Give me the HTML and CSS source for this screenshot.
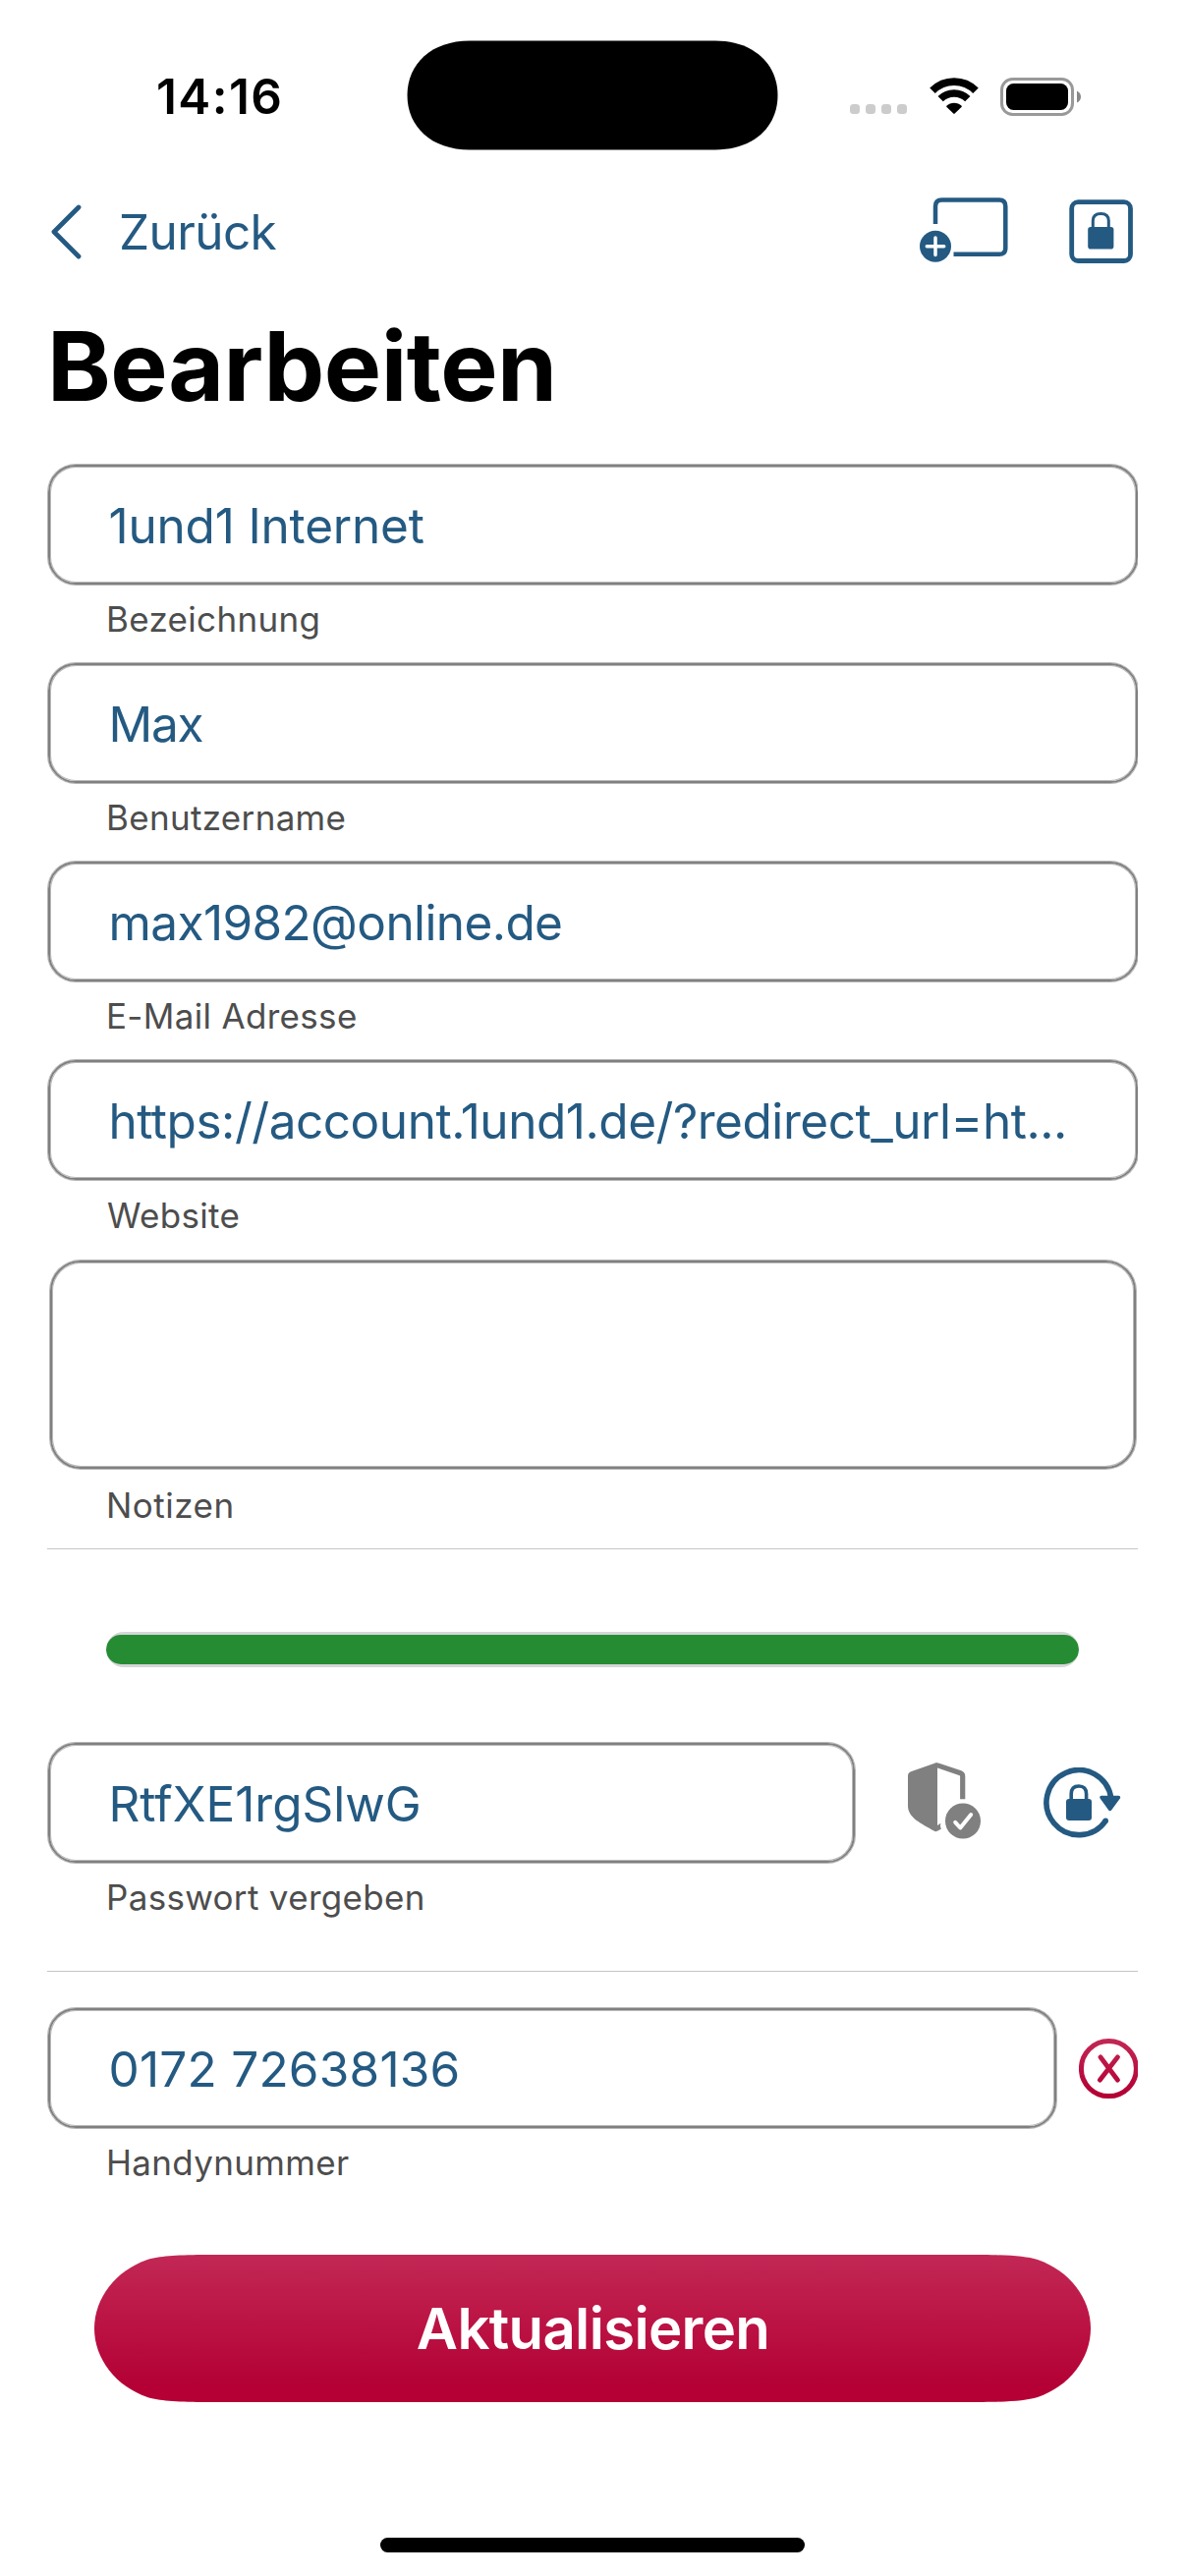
FILE: index.html
```html
<!DOCTYPE html>
<html lang="de">
<head>
<meta charset="utf-8">
<title>Bearbeiten</title>
<link rel="stylesheet" href="styles.css">
</head>
<body>
<header class="status-bar">
  <div class="status-time">14:16</div>
  <svg class="island" width="378" height="112" viewBox="0 0 378 112"><path d="M64 .5H314C353 .5 377.500 24 377.500 56S353 111.500 314 111.500H64C25 111.500 .5 88 .5 56S25 .5 64 .5Z"/></svg>
  <div class="status-icons">
    <svg class="signal" width="58" height="40" viewBox="0 0 58 40"><g fill="#ccc"><rect y="27" width="10" height="10" rx="3.500"/><rect x="16" y="27" width="10" height="10" rx="3.500"/><rect x="32" y="27" width="10" height="10" rx="3.500"/><rect x="48" y="27" width="10" height="10" rx="3.500"/></g></svg>
    <svg class="wifi" width="50" height="40" viewBox="0 0 50 40"><g fill="none" stroke="#000"><path d="M3 13.200A31 31 0 0 1 47 13.200" stroke-width="7.800"/><path d="M11.200 21.700A19.500 19.500 0 0 1 38.800 21.700" stroke-width="7.500"/></g><path d="M17.300 28.700C21.500 24.700 28.500 24.700 32.700 28.700Q33 29.400 32.500 29.900L25.700 36.600Q25 37.200 24.300 36.600L17.500 29.900Q17 29.400 17.300 28.700Z"/></svg>
    <svg class="battery" width="84" height="40" viewBox="0 0 84 40"><rect x="1.500" y="1.500" width="72" height="36" rx="11" fill="none" stroke="#999" stroke-width="3"/><rect x="6" y="6" width="63" height="27" rx="7.500"/><path d="M78 13.500Q82 15.500 82 19.500T78 25.500Z" fill="#888"/></svg>
  </div>
</header>
<nav class="nav">
  <a class="back">
    <svg width="36" height="60" viewBox="0 0 36 60"><path d="M32 5 7 30 32 55" fill="none" stroke="currentColor" stroke-width="4.800" stroke-linecap="round" stroke-linejoin="round"/></svg>
    <span>Zurück</span>
  </a>
  <div class="actions">
    <svg class="add" width="92" height="70" viewBox="0 0 92 70"><path d="M16 29V11Q16 4.500 22.500 4.500H81Q87.300 4.500 87.300 11V53.500Q87.300 59.800 81 59.800H34.500" fill="none" stroke="currentColor" stroke-width="4.500"/><circle cx="16" cy="51.800" r="16" fill="currentColor"/><path d="M7.300 51.800H24.700M16 43.100V60.500" fill="none" stroke="#fff" stroke-width="3.500" stroke-linecap="round"/></svg>
    <svg width="66" height="66" viewBox="0 0 66 66"><rect x="2.700" y="2.700" width="59.800" height="59.800" rx="6.500" fill="none" stroke="currentColor" stroke-width="4.800"/><rect x="19.200" y="28" width="26.200" height="22.500" rx="2.800" fill="currentColor"/><path d="M24.300 29V21.800Q24.300 14.500 32.300 14.500T40.300 21.800V29" fill="none" stroke="currentColor" stroke-width="3"/></svg>
  </div>
</nav>
<h1 class="title">Bearbeiten</h1>
<main class="form">
  <div class="group"><div class="field ls-a">1und1 Internet</div><div class="label">Bezeichnung</div></div>
  <div class="group"><div class="field ls-b">Max</div><div class="label">Benutzername</div></div>
  <div class="group"><div class="field ls-c">max1982@online.de</div><div class="label">E-Mail Adresse</div></div>
  <div class="group"><div class="field ls-f">https://account.1und1.de/?redirect_url=ht...</div><div class="label label-site">Website</div></div>
  <div class="group notes"><div class="field area"></div><div class="label">Notizen</div></div>
  <hr class="divider">
  <div class="strength"><div class="strength-fill"></div></div>
  <div class="row row-password">
    <div class="group"><div class="field ls-d">RtfXE1rgSlwG</div><div class="label">Passwort vergeben</div></div>
    <svg class="shield" width="76" height="80" viewBox="0 0 76 80"><g fill="#808080"><path d="M30 .8V69.600Q28.500 70.800 26.500 69.600C14 62 0 56.500 0 44V13.500Q0 10.500 3 9.300L26.500 .9Q28.500 .2 30 .8Z"/><path d="M30 64 33.500 61.800C32.500 65 33.300 66.500 34 67.500L30 69.700Z"/><circle cx="56" cy="59.500" r="18"/></g><path d="M28.500 3Q29.500 2.600 31 3.100L53.500 10.800Q55.700 11.600 55.700 14V37.300" fill="none" stroke="#808080" stroke-width="5.200"/><path d="M48.200 60.800 53.300 66.500 64.200 53" fill="none" stroke="#fff" stroke-width="4" stroke-linecap="round" stroke-linejoin="round"/></svg>
    <svg class="refresh" width="80" height="74" viewBox="0 0 80 74"><path d="M68.700 31.200A33 33 0 1 0 63.300 54.200" fill="none" stroke="currentColor" stroke-width="5.600"/><circle cx="63.200" cy="54.200" r="2.800" fill="currentColor"/><path d="M59 30.500H76.500L67.700 42.500Z" fill="currentColor" stroke="currentColor" stroke-width="3.500" stroke-linejoin="round"/><rect x="23" y="32" width="26" height="22" rx="3" fill="currentColor"/><path d="M28.200 33V27Q28.200 19 35.900 19T43.600 27V33" fill="none" stroke="currentColor" stroke-width="3.600"/></svg>
  </div>
  <hr class="divider divider-second">
  <div class="row row-phone">
    <div class="group"><div class="field ls-e">0172 72638136</div><div class="label">Handynummer</div></div>
    <svg class="remove" width="62" height="62" viewBox="0 0 62 62"><defs><linearGradient id="red" gradientUnits="userSpaceOnUse" x1="0" y1="0" x2="0" y2="62"><stop offset="0" stop-color="#c22855"/><stop offset=".9" stop-color="#b40034"/></linearGradient></defs><g fill="none" stroke="url(#red)"><circle cx="30.400" cy="30.600" r="28" stroke-width="5"/><path d="M21.900 18.800 39.500 42.200M39.500 18.800 21.300 42.200" stroke-width="4.800" stroke-linecap="round"/></g></svg>
  </div>
  <button class="submit"><span>Aktualisieren</span></button>
</main>
<div class="home-indicator"></div>
</body>
</html>
```
FILE: styles.css
```css
* { box-sizing: border-box; }
body {
  margin: 0;
  width: 1206px;
  height: 2622px;
  overflow: hidden;
  background: #fff;
  color: #000;
  font-family: Inter, "Liberation Sans", sans-serif;
}
svg { display: block; flex: none; }

.status-bar {
  display: grid;
  grid-template-columns: 414px 378px 1fr;
  align-items: center;
  height: 194px;
}
.status-time {
  padding: 2px 0 0 159px;
  font-size: 49.5px;
  font-weight: 600;
  letter-spacing: 1.4px;
}
.status-icons {
  display: flex;
  align-items: center;
  padding: 3px 0 0 73px;
}
.wifi { margin-left: 22.5px; }
.battery { margin-left: 22.5px; }

.nav {
  display: flex;
  align-items: center;
  justify-content: space-between;
  height: 84px;
  padding: 0 52px 0 48px;
  color: #245a82;
}
.back {
  display: flex;
  align-items: center;
  gap: 37px;
  font-size: 49.5px;
  letter-spacing: -0.6px;
}
.actions {
  display: flex;
  align-items: center;
  gap: 60px;
}
.add { margin-bottom: 4px; }

.title {
  margin: 0;
  height: 190px;
  padding-left: 48px;
  font-size: 98px;
  font-weight: 700;
  line-height: 190px;
  letter-spacing: -0.5px;
}

.form {
  margin: 0 48px;
  padding: 5px 0 0 1px;
  overflow: hidden;
}
.group {
  display: flex;
  flex: none;
  flex-direction: column;
  height: 202px;
}
.field {
  height: 122px;
  padding: 2px 40px 0 59.5px;
  border: 2px solid #808080;
  border-radius: 28px;
  box-shadow: 0 0 0 1px #b8b8b8, inset 0 0 0 1px #b8b8b8;
  color: #245a82;
  font-size: 49.5px;
  line-height: 116px;
  white-space: nowrap;
}
.ls-a { letter-spacing: -0.18px; }
.ls-b { letter-spacing: -1.2px; }
.ls-c { letter-spacing: -0.6px; }
.ls-d { letter-spacing: 0; }
.ls-e { letter-spacing: 0.23px; }
.ls-f { letter-spacing: -0.46px; }
.label {
  padding-left: 59px;
  color: #4d4d4d;
  font-size: 35px;
  line-height: 71px;
  letter-spacing: 0.32px;
}
.label-site { padding: 1px 0 0 60px; }
.notes {
  height: 292px;
  margin: 2px 2px 0;
}
.notes .label { padding: 2px 0 0 57px; letter-spacing: 0.5px; }
.area { height: 212px; border-radius: 31px; }

.divider {
  height: 1px;
  margin: 1px 0 0 -1px;
  border: 0;
  background: #c6c6c8;
}
.divider-second { margin-top: 30px; }
.strength {
  height: 36px;
  margin: 84px 60px 0 59px;
  padding: 3px 0;
  border-radius: 18px;
  background: #d6d6d8;
  overflow: hidden;
}
.strength-fill {
  height: 30px;
  border-radius: 16px;
  background: #268c33;
}

.row { display: flex; color: #245a82; }
.row-password { margin-top: 77px; }
.row-password .group { width: 821px; }
.shield { margin: 20px 0 0 54.3px; }
.refresh { margin: 24.5px 0 0 61.3px; }
.row-phone { margin-top: 37px; }
.row-phone .group { width: 1026px; }
.remove { margin: 31px 0 0 23px; }

.submit {
  display: flex;
  align-items: center;
  justify-content: center;
  width: 1014px;
  height: 150px;
  margin: 49px 0 0 47px;
  padding: 0 0 0 1px;
  border: 0;
  background: linear-gradient(#c22855, #b40034 90%);
  clip-path: path("M110 0H904C932 .3 948 1.500 960 5C992 16 1014 44 1014 75S992 134 960 145C948 148.500 932 149.700 904 150H110C82 149.700 66 148.500 54 145C22 134 0 106 0 75S22 16 54 5C66 1.500 82 .3 110 0Z");
  color: #fff;
  font-family: inherit;
  font-size: 58px;
  font-weight: 600;
  letter-spacing: -0.65px;
}
.home-indicator {
  width: 432px;
  height: 15px;
  margin: 138px auto 0;
  border-radius: 7.5px;
  background: #000;
}
```
